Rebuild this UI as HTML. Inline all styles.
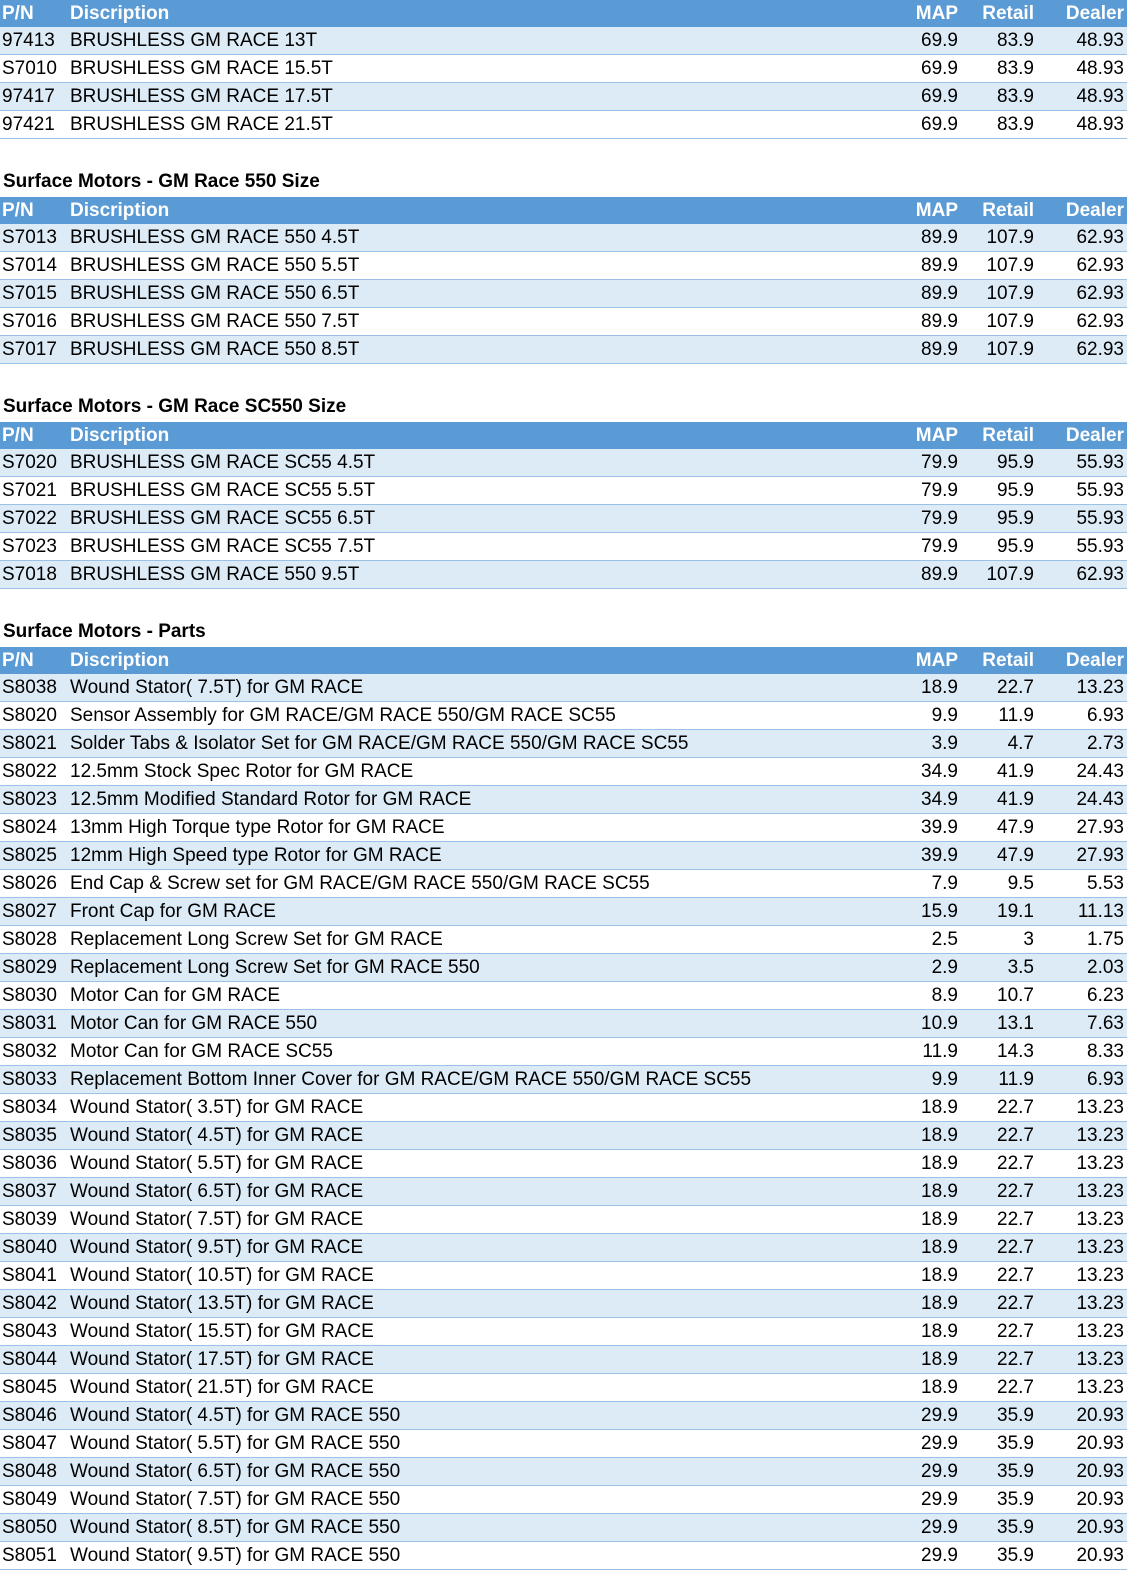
<!DOCTYPE html>
<html><head><meta charset="utf-8"><style>
*{margin:0;padding:0;box-sizing:border-box}
body{width:1139px;height:1584px;background:#fff;font-family:"Liberation Sans",Arial,sans-serif;font-size:19px;color:#000;overflow:hidden}
.t{width:1127px}
.r{position:relative;height:28px;border-bottom:1px solid #9bc2e6;background:#fff;line-height:28px}
.r:nth-child(even){background:#ddebf7}
.h{height:27px;line-height:27px;background:#5b9bd5;color:#fff;font-weight:bold;border-bottom:none}
.r span{position:absolute;top:0;white-space:nowrap}
.p{left:2px}.d{left:70px}
.m{right:169px}.rt{right:93px}.dl{right:3px}
.ttl{height:58px;font-weight:bold;font-size:19px;padding-top:27px;padding-left:3px;line-height:32px}
</style></head><body>
<div class="t">
<div class="r h"><span class="p">P/N</span><span class="d">Discription</span><span class="m">MAP</span><span class="rt">Retail</span><span class="dl">Dealer</span></div>
<div class="r"><span class="p">97413</span><span class="d">BRUSHLESS GM RACE 13T</span><span class="m">69.9</span><span class="rt">83.9</span><span class="dl">48.93</span></div>
<div class="r"><span class="p">S7010</span><span class="d">BRUSHLESS GM RACE 15.5T</span><span class="m">69.9</span><span class="rt">83.9</span><span class="dl">48.93</span></div>
<div class="r"><span class="p">97417</span><span class="d">BRUSHLESS GM RACE 17.5T</span><span class="m">69.9</span><span class="rt">83.9</span><span class="dl">48.93</span></div>
<div class="r"><span class="p">97421</span><span class="d">BRUSHLESS GM RACE 21.5T</span><span class="m">69.9</span><span class="rt">83.9</span><span class="dl">48.93</span></div>
</div>
<div class="ttl">Surface Motors - GM Race 550 Size</div>
<div class="t">
<div class="r h"><span class="p">P/N</span><span class="d">Discription</span><span class="m">MAP</span><span class="rt">Retail</span><span class="dl">Dealer</span></div>
<div class="r"><span class="p">S7013</span><span class="d">BRUSHLESS GM RACE 550 4.5T</span><span class="m">89.9</span><span class="rt">107.9</span><span class="dl">62.93</span></div>
<div class="r"><span class="p">S7014</span><span class="d">BRUSHLESS GM RACE 550 5.5T</span><span class="m">89.9</span><span class="rt">107.9</span><span class="dl">62.93</span></div>
<div class="r"><span class="p">S7015</span><span class="d">BRUSHLESS GM RACE 550 6.5T</span><span class="m">89.9</span><span class="rt">107.9</span><span class="dl">62.93</span></div>
<div class="r"><span class="p">S7016</span><span class="d">BRUSHLESS GM RACE 550 7.5T</span><span class="m">89.9</span><span class="rt">107.9</span><span class="dl">62.93</span></div>
<div class="r"><span class="p">S7017</span><span class="d">BRUSHLESS GM RACE 550 8.5T</span><span class="m">89.9</span><span class="rt">107.9</span><span class="dl">62.93</span></div>
</div>
<div class="ttl">Surface Motors - GM Race SC550 Size</div>
<div class="t">
<div class="r h"><span class="p">P/N</span><span class="d">Discription</span><span class="m">MAP</span><span class="rt">Retail</span><span class="dl">Dealer</span></div>
<div class="r"><span class="p">S7020</span><span class="d">BRUSHLESS GM RACE SC55 4.5T</span><span class="m">79.9</span><span class="rt">95.9</span><span class="dl">55.93</span></div>
<div class="r"><span class="p">S7021</span><span class="d">BRUSHLESS GM RACE SC55 5.5T</span><span class="m">79.9</span><span class="rt">95.9</span><span class="dl">55.93</span></div>
<div class="r"><span class="p">S7022</span><span class="d">BRUSHLESS GM RACE SC55 6.5T</span><span class="m">79.9</span><span class="rt">95.9</span><span class="dl">55.93</span></div>
<div class="r"><span class="p">S7023</span><span class="d">BRUSHLESS GM RACE SC55 7.5T</span><span class="m">79.9</span><span class="rt">95.9</span><span class="dl">55.93</span></div>
<div class="r"><span class="p">S7018</span><span class="d">BRUSHLESS GM RACE 550 9.5T</span><span class="m">89.9</span><span class="rt">107.9</span><span class="dl">62.93</span></div>
</div>
<div class="ttl">Surface Motors - Parts</div>
<div class="t">
<div class="r h"><span class="p">P/N</span><span class="d">Discription</span><span class="m">MAP</span><span class="rt">Retail</span><span class="dl">Dealer</span></div>
<div class="r"><span class="p">S8038</span><span class="d">Wound Stator( 7.5T) for GM RACE</span><span class="m">18.9</span><span class="rt">22.7</span><span class="dl">13.23</span></div>
<div class="r"><span class="p">S8020</span><span class="d">Sensor Assembly for GM RACE/GM RACE 550/GM RACE SC55</span><span class="m">9.9</span><span class="rt">11.9</span><span class="dl">6.93</span></div>
<div class="r"><span class="p">S8021</span><span class="d">Solder Tabs &amp; Isolator Set for GM RACE/GM RACE 550/GM RACE SC55</span><span class="m">3.9</span><span class="rt">4.7</span><span class="dl">2.73</span></div>
<div class="r"><span class="p">S8022</span><span class="d">12.5mm Stock Spec Rotor for GM RACE</span><span class="m">34.9</span><span class="rt">41.9</span><span class="dl">24.43</span></div>
<div class="r"><span class="p">S8023</span><span class="d">12.5mm Modified Standard Rotor for GM RACE</span><span class="m">34.9</span><span class="rt">41.9</span><span class="dl">24.43</span></div>
<div class="r"><span class="p">S8024</span><span class="d">13mm High Torque type Rotor for GM RACE</span><span class="m">39.9</span><span class="rt">47.9</span><span class="dl">27.93</span></div>
<div class="r"><span class="p">S8025</span><span class="d">12mm High Speed type Rotor for GM RACE</span><span class="m">39.9</span><span class="rt">47.9</span><span class="dl">27.93</span></div>
<div class="r"><span class="p">S8026</span><span class="d">End Cap &amp; Screw set for GM RACE/GM RACE 550/GM RACE SC55</span><span class="m">7.9</span><span class="rt">9.5</span><span class="dl">5.53</span></div>
<div class="r"><span class="p">S8027</span><span class="d">Front Cap for GM RACE</span><span class="m">15.9</span><span class="rt">19.1</span><span class="dl">11.13</span></div>
<div class="r"><span class="p">S8028</span><span class="d">Replacement Long Screw Set for GM RACE</span><span class="m">2.5</span><span class="rt">3</span><span class="dl">1.75</span></div>
<div class="r"><span class="p">S8029</span><span class="d">Replacement Long Screw Set for GM RACE 550</span><span class="m">2.9</span><span class="rt">3.5</span><span class="dl">2.03</span></div>
<div class="r"><span class="p">S8030</span><span class="d">Motor Can for GM RACE</span><span class="m">8.9</span><span class="rt">10.7</span><span class="dl">6.23</span></div>
<div class="r"><span class="p">S8031</span><span class="d">Motor Can for GM RACE 550</span><span class="m">10.9</span><span class="rt">13.1</span><span class="dl">7.63</span></div>
<div class="r"><span class="p">S8032</span><span class="d">Motor Can for GM RACE SC55</span><span class="m">11.9</span><span class="rt">14.3</span><span class="dl">8.33</span></div>
<div class="r"><span class="p">S8033</span><span class="d">Replacement Bottom Inner Cover for GM RACE/GM RACE 550/GM RACE SC55</span><span class="m">9.9</span><span class="rt">11.9</span><span class="dl">6.93</span></div>
<div class="r"><span class="p">S8034</span><span class="d">Wound Stator( 3.5T) for GM RACE</span><span class="m">18.9</span><span class="rt">22.7</span><span class="dl">13.23</span></div>
<div class="r"><span class="p">S8035</span><span class="d">Wound Stator( 4.5T) for GM RACE</span><span class="m">18.9</span><span class="rt">22.7</span><span class="dl">13.23</span></div>
<div class="r"><span class="p">S8036</span><span class="d">Wound Stator( 5.5T) for GM RACE</span><span class="m">18.9</span><span class="rt">22.7</span><span class="dl">13.23</span></div>
<div class="r"><span class="p">S8037</span><span class="d">Wound Stator( 6.5T) for GM RACE</span><span class="m">18.9</span><span class="rt">22.7</span><span class="dl">13.23</span></div>
<div class="r"><span class="p">S8039</span><span class="d">Wound Stator( 7.5T) for GM RACE</span><span class="m">18.9</span><span class="rt">22.7</span><span class="dl">13.23</span></div>
<div class="r"><span class="p">S8040</span><span class="d">Wound Stator( 9.5T) for GM RACE</span><span class="m">18.9</span><span class="rt">22.7</span><span class="dl">13.23</span></div>
<div class="r"><span class="p">S8041</span><span class="d">Wound Stator( 10.5T) for GM RACE</span><span class="m">18.9</span><span class="rt">22.7</span><span class="dl">13.23</span></div>
<div class="r"><span class="p">S8042</span><span class="d">Wound Stator( 13.5T) for GM RACE</span><span class="m">18.9</span><span class="rt">22.7</span><span class="dl">13.23</span></div>
<div class="r"><span class="p">S8043</span><span class="d">Wound Stator( 15.5T) for GM RACE</span><span class="m">18.9</span><span class="rt">22.7</span><span class="dl">13.23</span></div>
<div class="r"><span class="p">S8044</span><span class="d">Wound Stator( 17.5T) for GM RACE</span><span class="m">18.9</span><span class="rt">22.7</span><span class="dl">13.23</span></div>
<div class="r"><span class="p">S8045</span><span class="d">Wound Stator( 21.5T) for GM RACE</span><span class="m">18.9</span><span class="rt">22.7</span><span class="dl">13.23</span></div>
<div class="r"><span class="p">S8046</span><span class="d">Wound Stator( 4.5T) for GM RACE 550</span><span class="m">29.9</span><span class="rt">35.9</span><span class="dl">20.93</span></div>
<div class="r"><span class="p">S8047</span><span class="d">Wound Stator( 5.5T) for GM RACE 550</span><span class="m">29.9</span><span class="rt">35.9</span><span class="dl">20.93</span></div>
<div class="r"><span class="p">S8048</span><span class="d">Wound Stator( 6.5T) for GM RACE 550</span><span class="m">29.9</span><span class="rt">35.9</span><span class="dl">20.93</span></div>
<div class="r"><span class="p">S8049</span><span class="d">Wound Stator( 7.5T) for GM RACE 550</span><span class="m">29.9</span><span class="rt">35.9</span><span class="dl">20.93</span></div>
<div class="r"><span class="p">S8050</span><span class="d">Wound Stator( 8.5T) for GM RACE 550</span><span class="m">29.9</span><span class="rt">35.9</span><span class="dl">20.93</span></div>
<div class="r"><span class="p">S8051</span><span class="d">Wound Stator( 9.5T) for GM RACE 550</span><span class="m">29.9</span><span class="rt">35.9</span><span class="dl">20.93</span></div>
</div>
</body></html>
